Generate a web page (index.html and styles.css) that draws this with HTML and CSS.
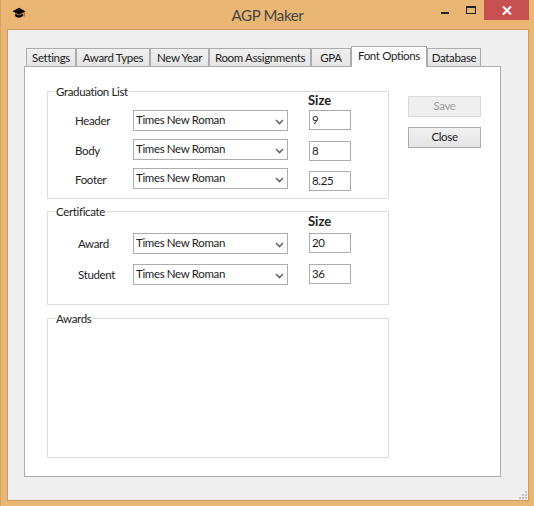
FILE: index.html
```html
<!DOCTYPE html>
<html lang="en">
<head>
    <meta charset="UTF-8">
    <meta name="viewport" content="width=device-width, initial-scale=1.0">
    <title>AGP Maker</title>
    <link rel="stylesheet" href="styles.css">
</head>
<body>
    <div class="window">
        <div class="titlebar">
            <svg class="app-icon" width="14" height="12" viewBox="0 0 16 14">
                <path d="M8 1 L15.5 5 L8 9 L0.5 5 Z" fill="#000"/>
                <path d="M3.5 7.5 L3.5 10.5 Q8 14.5 12.5 10.5 L12.5 7.5 L8 10 Z" fill="#000"/>
                <path d="M14 6 L14 11" stroke="#7a3b1a" stroke-width="1"/>
                <path d="M3 11 L4 12" stroke="#a33" stroke-width="1"/>
            </svg>
            <div class="title">AGP Maker</div>
            <div class="controls">
                <div class="ctl-btn"><span class="ctl-min"></span></div>
                <div class="ctl-btn"><span class="ctl-max"></span></div>
                <div class="ctl-close">
                    <svg width="10" height="9" viewBox="0 0 10 9">
                        <path d="M1 0.5 L9 8.5 M9 0.5 L1 8.5" stroke="#fff" stroke-width="2"/>
                    </svg>
                </div>
            </div>
        </div>

        <div class="client">
            <div class="tabs">
                <div class="tab tab-settings">Settings</div>
                <div class="tab tab-award">Award Types</div>
                <div class="tab tab-year">New Year</div>
                <div class="tab tab-room">Room Assignments</div>
                <div class="tab tab-gpa">GPA</div>
                <div class="tab tab-font active">Font Options</div>
                <div class="tab tab-db">Database</div>
            </div>

            <div class="panel">
                <div class="groups">
                    <div class="group group-grad">
                        <span class="legend">Graduation List</span>
                        <div class="size-head">Size</div>
                        <div class="row">
                            <div class="lbl">Header</div>
                            <div class="combo"><span>Times New Roman</span>
                                <svg width="9" height="6" viewBox="0 0 9 6"><path d="M1 1 L4.5 4.5 L8 1" fill="none" stroke="#666" stroke-width="1.6"/></svg>
                            </div>
                            <div class="field">9</div>
                        </div>
                        <div class="row">
                            <div class="lbl lbl-low">Body</div>
                            <div class="combo"><span>Times New Roman</span>
                                <svg width="9" height="6" viewBox="0 0 9 6"><path d="M1 1 L4.5 4.5 L8 1" fill="none" stroke="#666" stroke-width="1.6"/></svg>
                            </div>
                            <div class="field drop-2">8</div>
                        </div>
                        <div class="row">
                            <div class="lbl lbl-low">Footer</div>
                            <div class="combo"><span>Times New Roman</span>
                                <svg width="9" height="6" viewBox="0 0 9 6"><path d="M1 1 L4.5 4.5 L8 1" fill="none" stroke="#666" stroke-width="1.6"/></svg>
                            </div>
                            <div class="field drop-3">8.25</div>
                        </div>
                    </div>

                    <div class="group group-cert">
                        <span class="legend">Certificate</span>
                        <div class="size-head">Size</div>
                        <div class="row">
                            <div class="lbl">Award</div>
                            <div class="combo"><span>Times New Roman</span>
                                <svg width="9" height="6" viewBox="0 0 9 6"><path d="M1 1 L4.5 4.5 L8 1" fill="none" stroke="#666" stroke-width="1.6"/></svg>
                            </div>
                            <div class="field">20</div>
                        </div>
                        <div class="row">
                            <div class="lbl">Student</div>
                            <div class="combo"><span>Times New Roman</span>
                                <svg width="9" height="6" viewBox="0 0 9 6"><path d="M1 1 L4.5 4.5 L8 1" fill="none" stroke="#666" stroke-width="1.6"/></svg>
                            </div>
                            <div class="field">36</div>
                        </div>
                    </div>

                    <div class="group group-awards">
                        <span class="legend">Awards</span>
                    </div>
                </div>

                <div class="buttons">
                    <div class="btn disabled">Save</div>
                    <div class="btn">Close</div>
                </div>
            </div>

            <svg class="grip" width="8" height="8" viewBox="0 0 8 8" fill="#c4c4c4">
                <rect x="6" y="0" width="2" height="2"/>
                <rect x="3" y="3" width="2" height="2"/>
                <rect x="6" y="3" width="2" height="2"/>
                <rect x="0" y="6" width="2" height="2"/>
                <rect x="3" y="6" width="2" height="2"/>
                <rect x="6" y="6" width="2" height="2"/>
            </svg>
        </div>
    </div>
</body>
</html>
```

FILE: styles.css
```css
* {
    margin: 0;
    padding: 0;
    box-sizing: border-box;
}
body {
    background-color: #e9b673;
    font-family: "Lato", "Liberation Sans", sans-serif;
    font-size: 11.5px;
    letter-spacing: -0.35px;
    color: #222;
    overflow: hidden;
}
.window {
    width: 534px;
    height: 506px;
    border-left: 1px solid #d2a469;
}

/* title bar */
.titlebar {
    height: 29px;
    display: grid;
    grid-template-columns: 1fr auto 1fr;
    align-items: start;
}
.app-icon {
    margin: 7px 0 0 11px;
}
.title {
    font-size: 15px;
    line-height: 20px;
    margin-top: 5px;
    color: #444;
}
.controls {
    display: flex;
    justify-content: flex-end;
    padding-right: 5px;
}
.ctl-btn {
    width: 26px;
    height: 20px;
    display: flex;
    align-items: center;
    justify-content: center;
}
.ctl-min {
    width: 8px;
    height: 2px;
    margin-top: 6px;
    background-color: #222;
}
.ctl-max {
    width: 10px;
    height: 8px;
    border: 1px solid #222;
    border-top-width: 2px;
}
.ctl-close {
    width: 45px;
    height: 20px;
    background-color: #c75050;
    display: flex;
    align-items: center;
    justify-content: center;
}

/* client area */
.client {
    position: relative;
    width: 522px;
    height: 472px;
    margin-left: 6px;
    padding: 16px 0 0 16px;
    background-color: #efefef;
    border: 1px solid #c99c62;
}
.tabs {
    display: flex;
    align-items: flex-end;
    height: 20px;
    margin-left: 2px;
}
.tab {
    height: 18px;
    line-height: 18px;
    text-align: center;
    border: 1px solid #acacac;
    border-bottom: none;
    background: linear-gradient(#f0f0f0, #e5e5e5);
    white-space: nowrap;
}
.tab.active {
    position: relative;
    height: 21px;
    line-height: 18px;
    margin-bottom: -1px;
    background: #fff;
}
.tab-settings { width: 50px; }
.tab-award { width: 74px; }
.tab-year { width: 59px; }
.tab-room { width: 102px; }
.tab-gpa { width: 40px; }
.tab-font { width: 76px; }
.tab-db { width: 54px; }

.panel {
    display: flex;
    align-items: flex-start;
    width: 477px;
    height: 411px;
    padding: 24px 0 0 22px;
    background-color: #fff;
    border: 1px solid #acacac;
}
.groups {
    width: 342px;
}

/* group boxes */
.group {
    position: relative;
    border: 1px solid #dcdcdc;
}
.group-grad {
    height: 108px;
}
.group-cert {
    height: 94px;
    margin-top: 12px;
}
.group-awards {
    height: 140px;
    margin-top: 13px;
}
.legend {
    position: absolute;
    top: -8px;
    left: 7px;
    padding: 0 1px;
    line-height: 16px;
    background-color: #fff;
}
.size-head {
    height: 18px;
    line-height: 17px;
    padding-left: 260px;
    font-size: 13px;
    font-weight: bold;
    letter-spacing: 0;
}
.group-cert .size-head {
    height: 21px;
    line-height: 19px;
}
.row {
    display: flex;
    align-items: flex-start;
    height: 21px;
    margin-bottom: 8px;
    padding-left: 27px;
}
.group-cert .row {
    margin-bottom: 10px;
    padding-left: 30px;
}
.lbl {
    width: 58px;
    line-height: 21px;
}
.lbl-low {
    margin-top: 1px;
}
.group-cert .lbl {
    width: 55px;
}
.combo {
    width: 155px;
    height: 21px;
    display: flex;
    align-items: center;
    justify-content: space-between;
    padding: 0 3px 3px 2px;
    border: 1px solid #acacac;
}
.combo svg {
    margin-top: 6px;
}
.field {
    width: 42px;
    height: 20px;
    margin-left: 21px;
    padding-left: 2px;
    line-height: 17px;
    border: 1px solid #acacac;
}
.drop-2 { margin-top: 2px; }
.drop-3 { margin-top: 3px; }

/* buttons */
.buttons {
    display: flex;
    flex-direction: column;
    gap: 10px;
    margin: 5px 0 0 19px;
}
.btn {
    width: 73px;
    height: 21px;
    line-height: 18px;
    text-align: center;
    border: 1px solid #acacac;
    background: linear-gradient(#f0f0f0, #e5e5e5);
}
.btn.disabled {
    color: #a0a0a0;
    border-color: #d9d9d9;
    background: #efefef;
}
.grip {
    position: absolute;
    right: 1px;
    bottom: 1px;
}
```
